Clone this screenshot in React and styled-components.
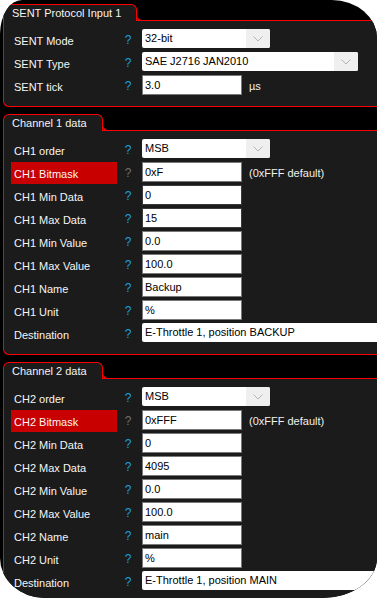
import React from "react";
import styled, { createGlobalStyle } from "styled-components";

const Global = createGlobalStyle`
  html, body { margin: 0; padding: 0; background: #ffffff; }
  body { font-family: "Liberation Sans", Arial, sans-serif; }
`;

const Frame = styled.div`
  width: 377px;
  height: 598px;
  background: #000;
  overflow: hidden;
  border-radius: 22px 45px 55px 45px / 34px 38px 40px 40px;
  display: flex;
  flex-direction: column;
  font-family: "Liberation Sans", Arial, sans-serif;
  font-size: 11px;
`;

const Group = styled.section`
  margin: ${(p) => (p.$first ? "4px" : "7px")} 0 0 3px;
  display: flex;
  flex-direction: column;
  align-items: flex-start;
  flex-shrink: 0;
`;

const Tab = styled.div`
  position: relative;
  z-index: 1;
  box-sizing: border-box;
  height: 17px;
  margin-bottom: -1px;
  padding: 0 15px 0 8px;
  line-height: 16px;
  color: #f4f4f4;
  font-size: 11px;
  background: #1b1b1b;
  border: 1px solid #ff0000;
  border-bottom: none;
  border-radius: 6px 6px 0 0;
  white-space: nowrap;
  &::after {
    content: "";
    position: absolute;
    right: -7px;
    bottom: 0;
    width: 6px;
    height: 6px;
    border-left: 1px solid #ff0000;
    border-bottom: 1px solid #ff0000;
    border-bottom-left-radius: 6px;
    background: #000;
  }
`;

const Body = styled.div`
  box-sizing: border-box;
  width: 440px;
  background: #1b1b1b;
  border: 1px solid #ff0000;
  border-right: none;
  border-bottom-left-radius: 6px;
  padding: 8px 0 8px 7px;
  display: flex;
  flex-direction: column;
`;

const Row = styled.div`
  display: flex;
  align-items: flex-start;
  height: 23px;
`;

const Label = styled.div`
  box-sizing: border-box;
  width: 106px;
  height: 22px;
  padding-left: 3px;
  padding-top: 1px;
  line-height: 22px;
  color: #f6f6f6;
  font-size: 11px;
  background: ${(p) => (p.$alert ? "#c80000" : "transparent")};
  white-space: nowrap;
`;

const Help = styled.div`
  width: 25px;
  padding-right: 3px;
  box-sizing: border-box;
  text-align: center;
  line-height: 23px;
  font-size: 12px;
  color: ${(p) => (p.$muted ? "#6f6f6f" : "#1d9fe0")};
`;

const Field = styled.div`
  box-sizing: border-box;
  width: 100px;
  height: 20px;
  background: #fff;
  border: 1px solid ${(p) => (p.$dark ? "#3a3a3a" : "#787878")};
  color: #000;
  font-size: 11px;
  line-height: 18px;
  padding-left: 2px;
  white-space: nowrap;
  overflow: hidden;
`;

const Select = styled.div`
  box-sizing: border-box;
  width: ${(p) => p.$w}px;
  height: 19px;
  background: #fff;
  border-radius: 2px;
  display: flex;
  align-items: stretch;
  color: #000;
  font-size: 11px;
  overflow: hidden;
`;

const SelectText = styled.span`
  flex: 1;
  padding-left: 3px;
  line-height: 19px;
  white-space: nowrap;
`;

const Arrow = styled.span`
  width: 24px;
  background: #efefef;
  display: flex;
  align-items: center;
  justify-content: center;
`;

const Unit = styled.span`
  margin-left: 7px;
  line-height: 23px;
  color: #f0f0f0;
  font-size: 11px;
  white-space: nowrap;
`;

const Chevron = () => (
  <svg width="10" height="6" viewBox="0 0 10 6">
    <path d="M0.5 0.5 L5 5 L9.5 0.5" fill="none" stroke="#b4b4b4" strokeWidth="1" />
  </svg>
);

const DropDown = ({ w, value, arrow = true }) => (
  <Select $w={w}>
    <SelectText>{value}</SelectText>
    {arrow && (
      <Arrow>
        <Chevron />
      </Arrow>
    )}
  </Select>
);

const channelRows = (n, data) => [
  { label: `CH${n} order`, select: { w: 128, value: "MSB" } },
  { label: `CH${n} Bitmask`, alert: true, field: data.mask, unit: "(0xFFF default)" },
  { label: `CH${n} Min Data`, field: "0", dark: n === 1 },
  { label: `CH${n} Max Data`, field: data.max, dark: n === 1 },
  { label: `CH${n} Min Value`, field: "0.0" },
  { label: `CH${n} Max Value`, field: "100.0" },
  { label: `CH${n} Name`, field: data.name },
  { label: `CH${n} Unit`, field: "%" },
  { label: "Destination", select: { w: 300, value: data.dest, arrow: false } },
];

const groups = [
  {
    title: "SENT Protocol Input 1",
    rows: [
      { label: "SENT Mode", select: { w: 128, value: "32-bit" } },
      { label: "SENT Type", select: { w: 216, value: "SAE J2716 JAN2010" } },
      { label: "SENT tick", field: "3.0", unit: "µs" },
    ],
  },
  {
    title: "Channel 1 data",
    rows: channelRows(1, {
      mask: "0xF",
      max: "15",
      name: "Backup",
      dest: "E-Throttle 1, position BACKUP",
    }),
  },
  {
    title: "Channel 2 data",
    rows: channelRows(2, {
      mask: "0xFFF",
      max: "4095",
      name: "main",
      dest: "E-Throttle 1, position MAIN",
    }),
  },
];

export default function App() {
  return (
    <>
      <Global />
      <Frame>
        {groups.map((g, gi) => (
          <Group key={g.title} $first={gi === 0}>
            <Tab>{g.title}</Tab>
            <Body>
              {g.rows.map((r) => (
                <Row key={r.label}>
                  <Label $alert={r.alert}>{r.label}</Label>
                  <Help $muted={r.alert}>?</Help>
                  {r.select ? (
                    <DropDown w={r.select.w} value={r.select.value} arrow={r.select.arrow !== false} />
                  ) : (
                    <Field $dark={r.dark}>{r.field}</Field>
                  )}
                  {r.unit && <Unit>{r.unit}</Unit>}
                </Row>
              ))}
            </Body>
          </Group>
        ))}
      </Frame>
    </>
  );
}
